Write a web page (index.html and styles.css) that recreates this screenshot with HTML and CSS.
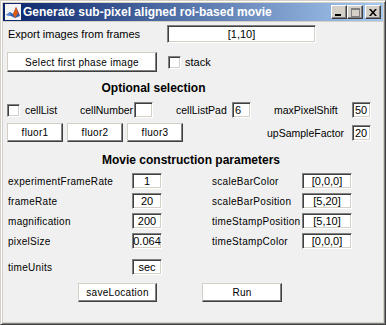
FILE: index.html
```html
<!DOCTYPE html>
<html lang="en">
<head>
  <meta charset="UTF-8">
  <meta name="viewport" content="width=device-width, initial-scale=1.0">
  <title>Generate sub-pixel aligned roi-based movie</title>
  <link rel="stylesheet" href="styles.css">
</head>
<body>
  <div class="window">
    <div class="titlebar">
      <svg class="app-icon" width="16" height="16" viewBox="0 0 16 16">
        <rect x="0" y="0" width="16" height="16" fill="#f4f4f4"/>
        <polygon points="1,11 5,8 8,10 11,3 15,12 10,14 6,12" fill="#2a5db0"/>
        <polygon points="8,10 11,3 13,9 10,14" fill="#e05a10"/>
        <polygon points="11,3 15,12 13,9" fill="#b02008"/>
        <polygon points="1,11 5,8 6,12" fill="#5a8ad8"/>
      </svg>
      <span class="title">Generate sub-pixel aligned roi-based movie</span>
      <div class="title-buttons">
        <span class="tbtn">
          <svg width="8" height="7" viewBox="0 0 8 7"><rect x="0" y="5" width="6" height="2" fill="#000"/></svg>
        </span>
        <span class="tbtn">
          <svg width="9" height="9" viewBox="0 0 9 9"><rect x="0.5" y="0.5" width="8" height="8" fill="none" stroke="#808080"/><rect x="0" y="0" width="9" height="2" fill="#808080"/></svg>
        </span>
        <span class="tbtn close">
          <svg width="8" height="7" viewBox="0 0 8 7"><path d="M0 0h2l2 2.5 2-2.5h2l-3 3.5 3 3.5h-2l-2-2.5-2 2.5h-2l3-3.5z" fill="#000"/></svg>
        </span>
      </div>
    </div>

    <div class="client">
      <div class="row row-export">
        <span class="lbl export-lbl">Export images from frames</span>
        <span class="edit frames-edit">[1,10]</span>
      </div>

      <div class="row row-phase">
        <span class="btn phase-btn">Select first phase image</span>
        <span class="check stack-check"></span>
        <span class="lbl stack-lbl">stack</span>
      </div>

      <div class="heading heading-opt">Optional selection</div>

      <div class="row row-cells">
        <span class="check"></span>
        <span class="sml w-celllist">cellList</span>
        <span class="sml w-cellnumber">cellNumber</span>
        <span class="edit small-edit"></span>
        <span class="sml w-celllistpad">cellListPad</span>
        <span class="edit small-edit left">6</span>
        <span class="sml w-maxshift">maxPixelShift</span>
        <span class="edit small-edit left">50</span>
      </div>

      <div class="row row-fluor">
        <span class="btn fluor-btn">fluor1</span>
        <span class="btn fluor-btn">fluor2</span>
        <span class="btn fluor-btn">fluor3</span>
        <span class="sml w-upsample">upSampleFactor</span>
        <span class="edit small-edit left">20</span>
      </div>

      <div class="heading heading-movie">Movie construction parameters</div>

      <div class="row param-row">
        <span class="plbl left-lbl">experimentFrameRate</span>
        <span class="edit num-edit">1</span>
        <span class="plbl right-lbl">scaleBarColor</span>
        <span class="edit vec-edit">[0,0,0]</span>
      </div>
      <div class="row param-row">
        <span class="plbl left-lbl">frameRate</span>
        <span class="edit num-edit">20</span>
        <span class="plbl right-lbl">scaleBarPosition</span>
        <span class="edit vec-edit">[5,20]</span>
      </div>
      <div class="row param-row">
        <span class="plbl left-lbl">magnification</span>
        <span class="edit num-edit">200</span>
        <span class="plbl right-lbl">timeStampPosition</span>
        <span class="edit vec-edit">[5,10]</span>
      </div>
      <div class="row param-row">
        <span class="plbl left-lbl">pixelSize</span>
        <span class="edit num-edit">0.064</span>
        <span class="plbl right-lbl">timeStampColor</span>
        <span class="edit vec-edit">[0,0,0]</span>
      </div>
      <div class="row param-row units-row">
        <span class="plbl left-lbl">timeUnits</span>
        <span class="edit num-edit">sec</span>
      </div>

      <div class="row row-actions">
        <span class="btn save-btn">saveLocation</span>
        <span class="btn run-btn">Run</span>
      </div>
    </div>
  </div>
</body>
</html>
```

FILE: styles.css
```css
body {
  margin: 0;
  background-color: #d4d0c8;
  font-family: "Liberation Sans", Arial, sans-serif;
  color: #000;
}
.window {
  width: 386px;
  height: 325px;
  box-sizing: border-box;
  border: 1px solid;
  border-color: #d4d0c8 #404040 #404040 #d4d0c8;
  box-shadow: inset 1px 1px #fff, inset -1px -1px #808080;
  padding: 2px;
  background-color: #d4d0c8;
  display: flex;
  flex-direction: column;
}
.titlebar {
  height: 18px;
  display: flex;
  align-items: center;
  background: linear-gradient(to right, #0a246a, #a6caf0);
  flex-shrink: 0;
}
.app-icon {
  margin-left: 2px;
}
.title {
  margin-left: 2px;
  color: #fff;
  font-weight: bold;
  font-size: 12px;
  white-space: nowrap;
}
.title-buttons {
  margin-left: auto;
  margin-right: 2px;
  display: flex;
}
.tbtn {
  width: 16px;
  height: 14px;
  box-sizing: border-box;
  background-color: #d4d0c8;
  border: 1px solid;
  border-color: #fff #404040 #404040 #fff;
  box-shadow: inset -1px -1px #808080;
  display: flex;
  align-items: center;
  justify-content: center;
}
.tbtn.close {
  margin-left: 2px;
}
.client {
  flex: 1;
  margin-top: 1px;
  background-color: #f0f0f0;
}
.row {
  display: flex;
  align-items: center;
}
.lbl {
  font-size: 11px;
}
.sml {
  font-size: 10.5px;
}
.plbl {
  font-size: 10px;
  letter-spacing: 0.3px;
}
.edit {
  box-sizing: border-box;
  background-color: #fff;
  border: 1px solid;
  border-color: #808080 #fff #fff #808080;
  box-shadow: inset 1px 1px #404040, inset -1px -1px #d4d0c8;
  font-size: 11px;
  text-align: center;
  line-height: 14px;
  overflow: hidden;
  white-space: nowrap;
}
.edit.left {
  text-align: left;
  padding-left: 2px;
}
.btn {
  box-sizing: border-box;
  background-color: #fff;
  border: 1px solid;
  border-color: #d4d0c8 #404040 #404040 #d4d0c8;
  box-shadow: inset -1px -1px #808080;
  font-size: 10px;
  letter-spacing: 0.3px;
  display: flex;
  align-items: center;
  justify-content: center;
}
.check {
  width: 13px;
  height: 13px;
  box-sizing: border-box;
  background-color: #fff;
  border: 1px solid;
  border-color: #808080 #fff #fff #808080;
  box-shadow: inset 1px 1px #404040, inset -1px -1px #d4d0c8;
}

/* top rows */
.row-export {
  margin-top: 3px;
  height: 18px;
  padding-left: 5px;
}
.export-lbl {
  width: 159px;
}
.frames-edit {
  width: 149px;
  height: 18px;
  line-height: 16px;
}
.row-phase {
  margin-top: 9px;
  height: 20px;
  padding-left: 4px;
}
.phase-btn {
  width: 150px;
  height: 20px;
}
.stack-check {
  margin-left: 11px;
}
.stack-lbl {
  margin-left: 4px;
}

.heading {
  font-size: 12px;
  font-weight: bold;
  line-height: 14px;
  text-align: center;
}
.heading-opt {
  margin-top: 9px;
  width: 301px;
}

/* optional selection */
.row-cells {
  margin-top: 7px;
  height: 16px;
  padding-left: 4px;
}
.w-celllist {
  margin-left: 5px;
  width: 55px;
}
.w-cellnumber {
  width: 54px;
}
.small-edit {
  width: 19px;
  height: 16px;
}
.w-celllistpad {
  margin-left: 23px;
  width: 56px;
}
.w-maxshift {
  margin-left: 23px;
  width: 78px;
}
.row-fluor {
  margin-top: 5px;
  height: 19px;
  padding-left: 4px;
}
.fluor-btn {
  width: 56px;
  height: 19px;
  margin-right: 4px;
}
.w-upsample {
  margin-left: 80px;
  width: 85px;
}

/* movie parameters */
.heading-movie {
  margin-top: 11px;
  width: 376px;
}
.param-row {
  margin-top: 4px;
  height: 16px;
  padding-left: 5px;
}
.heading-movie + .param-row {
  margin-top: 6px;
}
.units-row {
  margin-top: 10px;
}
.left-lbl {
  width: 124px;
}
.num-edit {
  width: 30px;
  height: 16px;
}
.right-lbl {
  margin-left: 50px;
  width: 90px;
}
.vec-edit {
  width: 50px;
  height: 16px;
}
.row-actions {
  margin-top: 8px;
  padding-left: 75px;
}
.save-btn {
  width: 79px;
  height: 19px;
}
.run-btn {
  margin-left: 45px;
  width: 80px;
  height: 19px;
}
```
